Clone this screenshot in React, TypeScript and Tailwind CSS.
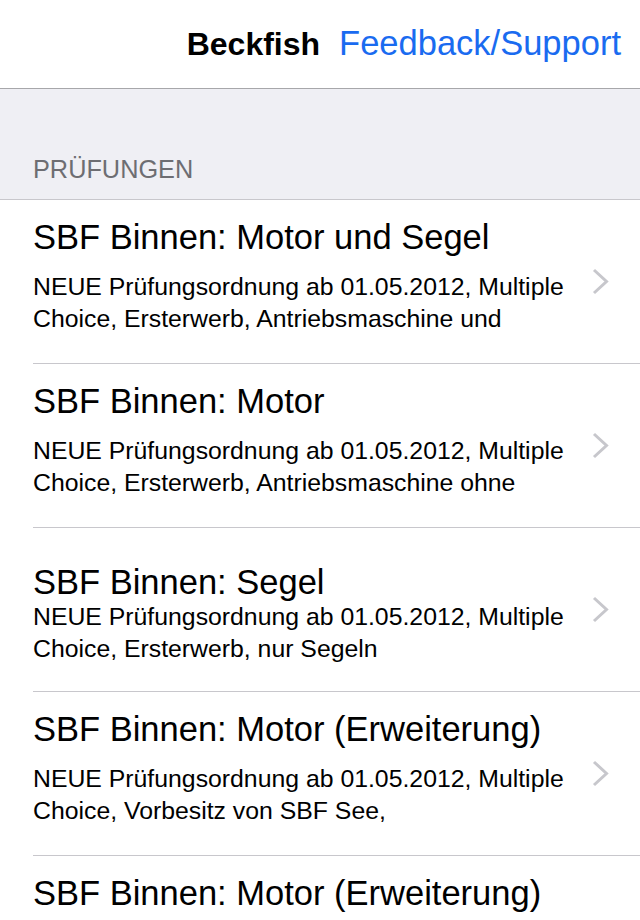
import React from 'react';

interface Exam {
  title: string;
  lines: string[];
  compact?: boolean;
}

const exams: Exam[] = [
  {
    title: 'SBF Binnen: Motor und Segel',
    lines: ['NEUE Prüfungsordnung ab 01.05.2012, Multiple', 'Choice, Ersterwerb, Antriebsmaschine und'],
  },
  {
    title: 'SBF Binnen: Motor',
    lines: ['NEUE Prüfungsordnung ab 01.05.2012, Multiple', 'Choice, Ersterwerb, Antriebsmaschine ohne'],
  },
  {
    title: 'SBF Binnen: Segel',
    lines: ['NEUE Prüfungsordnung ab 01.05.2012, Multiple', 'Choice, Ersterwerb, nur Segeln'],
    compact: true,
  },
  {
    title: 'SBF Binnen: Motor (Erweiterung)',
    lines: ['NEUE Prüfungsordnung ab 01.05.2012, Multiple', 'Choice, Vorbesitz von SBF See,'],
  },
  {
    title: 'SBF Binnen: Motor (Erweiterung)',
    lines: ['NEUE Prüfungsordnung ab 01.05.2012, Multiple', 'Choice, Vorbesitz von SBF See,'],
  },
];

const Chevron = () => (
  <svg width="17" height="27" viewBox="0 0 17 27" fill="none" className="shrink-0">
    <path d="M2 2 L14.5 13.5 L2 25" stroke="#c7c7cc" strokeWidth="3" />
  </svg>
);

const ExamRow: React.FC<{ exam: Exam }> = ({ exam }) => (
  <div className="flex h-[164px] items-stretch pl-[33px]">
    <div className="flex flex-1 items-center border-b border-[#c8c7cc] pr-[31px]">
      <div className={`flex-1 self-start ${exam.compact ? 'pt-[35px]' : 'pt-[17px]'}`}>
        <div className={`text-[34.5px] text-black whitespace-nowrap ${exam.compact ? 'leading-[38px]' : 'leading-[40px]'}`}>
          {exam.title}
        </div>
        <div className={`${exam.compact ? 'mt-0' : 'mt-[14px]'} text-[24.8px] leading-[32px] text-black`}>
          {exam.lines.map((line, i) => (
            <div key={i} className="whitespace-nowrap">{line}</div>
          ))}
        </div>
      </div>
      <Chevron />
    </div>
  </div>
);

export default function App() {
  return (
    <div className="h-[920px] w-[640px] overflow-hidden bg-white font-['Liberation_Sans',Arial,sans-serif]">
      {/* Nav bar */}
      <div className="flex h-[89px] items-center justify-end gap-[19px] border-b border-[#a7a7aa] pr-[19px]">
        <span className="text-[32px] font-bold text-black">Beckfish</span>
        <span className="text-[34.5px] text-[#1a6bf0]">Feedback/Support</span>
      </div>

      {/* Section header */}
      <div className="flex h-[111px] items-end border-b border-[#c8c7cc] bg-[#efeff4] pb-[14px] pl-[33px]">
        <span className="text-[25.3px] leading-[32px] text-[#6d6d72]">PRÜFUNGEN</span>
      </div>

      {exams.map((exam, i) => (
        <ExamRow key={i} exam={exam} />
      ))}
    </div>
  );
}
